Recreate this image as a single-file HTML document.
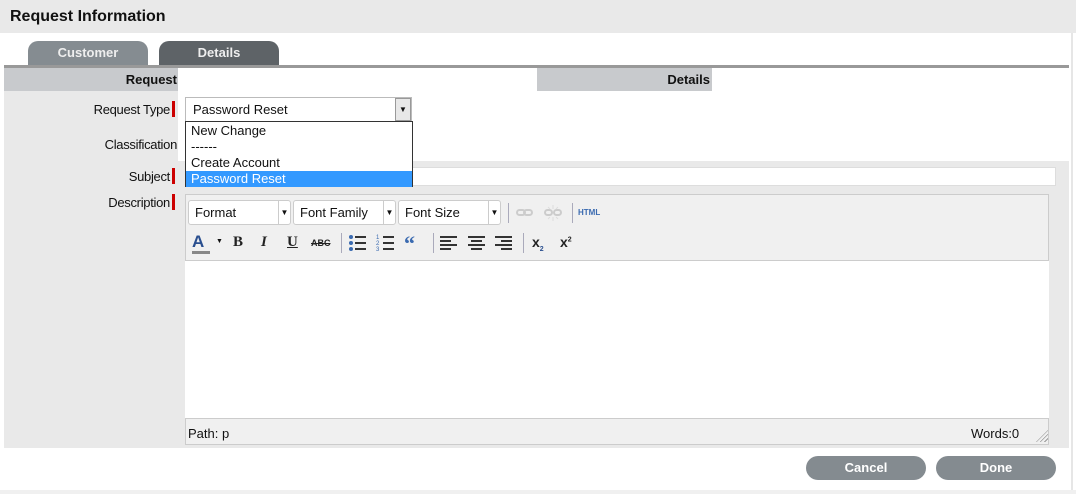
<!DOCTYPE html>
<html><head><style>
*{box-sizing:border-box;margin:0;padding:0}
body{width:1076px;height:494px;position:relative;background:#fff;font-family:"Liberation Sans",sans-serif;font-size:13px;color:#111;overflow:hidden}
.a{position:absolute}
.btn{position:absolute;top:456px;height:24px;width:120px;border-radius:12px;background:#848b90;color:#fff;font-weight:bold;text-align:center;line-height:24px;font-size:13px}
.lbl{position:absolute;text-align:right;font-size:13px;letter-spacing:-0.3px}
.req{position:absolute;left:172px;width:3px;height:16px;background:#c00}
.sel{position:absolute;top:200px;height:25px;background:#fff;border:1px solid #ccc;border-radius:3px;padding-left:6px;line-height:23px}
.sel i{position:absolute;right:0;top:0;width:12px;height:23px;border-left:1px solid #ccc;font-style:normal;font-size:8px;text-align:center}
.ic{position:absolute;top:234px;font-weight:bold;font-size:14px;color:#222}
.sep{position:absolute;width:1px;height:20px;background:#aab}
svg{position:absolute}
</style></head><body>
<div class="a" style="left:0;top:0;width:1076px;height:33px;background:#e9e9e9"></div>
<div class="a" style="left:10px;top:8px;font-weight:bold;font-size:16px">Request Information</div>
<div class="a" style="left:1071px;top:33px;width:2px;height:461px;background:#e6e6e6"></div>
<div class="a" style="left:0;top:490px;width:1076px;height:4px;background:#f0f0f0"></div>
<div class="a" style="left:28px;top:41px;width:120px;height:24px;background:#858c91;border-radius:10px 10px 0 0;color:#eee;font-weight:bold;text-align:center;line-height:24px">Customer</div>
<div class="a" style="left:159px;top:41px;width:120px;height:24px;background:#5e6367;border-radius:10px 10px 0 0;color:#eee;font-weight:bold;text-align:center;line-height:24px">Details</div>
<div class="a" style="left:4px;top:65px;width:1065px;height:3px;background:#999"></div>
<div class="a" style="left:4px;top:68px;width:174px;height:380px;background:#e9e9e9"></div>
<div class="a" style="left:4px;top:68px;width:174px;height:23px;background:#c8cacd;text-align:right;padding-right:1px;font-weight:bold;line-height:23px">Request</div>
<div class="a" style="left:537px;top:68px;width:175px;height:23px;background:#c8cacd;text-align:right;padding-right:2px;font-weight:bold;line-height:23px">Details</div>
<div class="a" style="left:178px;top:161px;width:891px;height:287px;background:#e9e9e9"></div>
<div class="lbl" style="top:102px;right:906px">Request Type</div><div class="req" style="top:101px"></div>
<div class="lbl" style="top:137px;right:899px">Classification</div>
<div class="lbl" style="top:169px;right:906px">Subject</div><div class="req" style="top:168px"></div>
<div class="lbl" style="top:195px;right:906px">Description</div><div class="req" style="top:194px"></div>
<div class="a" style="left:185px;top:167px;width:871px;height:19px;background:#fff;border:1px solid #ddd"></div>
<div class="a" style="left:185px;top:194px;width:864px;height:251px;background:#f0f0f0;border:1px solid #ccc"></div>
<div class="a" style="left:185px;top:260px;width:864px;height:159px;background:#fff;border-top:1px solid #ccc;border-bottom:1px solid #ccc"></div>
<div class="a" style="left:188px;top:426px">Path: p</div>
<div class="a" style="left:971px;top:426px">Words:0</div>
<div class="a" style="left:1036px;top:430px;width:12px;height:12px;background:repeating-linear-gradient(135deg,transparent 0 2px,#999 2px 3px);clip-path:polygon(100% 0,100% 100%,0 100%)"></div>
<div class="sel" style="left:188px;width:103px">Format<i>▼</i></div>
<div class="sel" style="left:293px;width:103px">Font Family<i>▼</i></div>
<div class="sel" style="left:398px;width:103px">Font Size<i>▼</i></div>
<div class="sep" style="left:508px;top:203px"></div>
<svg style="left:515px;top:205px" width="50" height="16"><g fill="none" stroke="#ccc" stroke-width="2"><rect x="2" y="5" width="8" height="5" rx="2.5"/><rect x="9" y="5" width="8" height="5" rx="2.5"/><rect x="30" y="5" width="7" height="5" rx="2.5"/><rect x="39" y="5" width="7" height="5" rx="2.5"/></g><g stroke="#ddd"><path d="M38 0v4M38 12v4M33 2l2 2M43 2l-2 2M33 14l2-2M43 14l-2-2"/></g></svg>
<div class="sep" style="left:572px;top:203px"></div>
<div class="a" style="left:578px;top:208px;color:#3a6ab0;font-size:8px;font-weight:bold">HTML</div>
<div class="ic" style="left:192px;top:232px;color:#2a4f8f;font-size:17px">A</div>
<div class="a" style="left:192px;top:251px;width:18px;height:3px;background:#888"></div>
<div class="a" style="left:216px;top:238px;font-size:7px">▼</div>
<div class="ic" style="left:233px;font-family:'Liberation Serif';font-size:15px">B</div>
<div class="ic" style="left:261px;font-family:'Liberation Serif';font-style:italic;font-size:15px">I</div>
<div class="ic" style="left:287px;font-family:'Liberation Serif';text-decoration:underline;font-size:15px">U</div>
<div class="ic" style="left:311px;font-size:9px;top:238px;text-decoration:line-through">ABC</div>
<div class="sep" style="left:341px;top:233px"></div>
<svg style="left:348px;top:234px" width="20" height="18"><g fill="#3a6ab0"><circle cx="3" cy="3" r="2"/><circle cx="3" cy="9" r="2"/><circle cx="3" cy="15" r="2"/></g><path d="M7 3h11M7 9h11M7 15h11" stroke="#333" stroke-width="2"/></svg>
<svg style="left:376px;top:234px" width="20" height="18"><g fill="#3a6ab0" font-size="6" font-family="Liberation Sans"><text x="0" y="5">1</text><text x="0" y="11">2</text><text x="0" y="17">3</text></g><path d="M7 3h11M7 9h11M7 15h11" stroke="#333" stroke-width="2"/></svg>
<div class="ic" style="left:404px;font-size:22px;top:231px;color:#3a6ab0;font-family:'Liberation Serif'">“</div>
<div class="sep" style="left:433px;top:233px"></div>
<svg style="left:440px;top:235px" width="18" height="16"><path d="M0 2h17M0 6h11M0 10h17M0 14h11" stroke="#333" stroke-width="2"/></svg>
<svg style="left:468px;top:235px" width="18" height="16"><path d="M0 2h17M3 6h11M0 10h17M3 14h11" stroke="#333" stroke-width="2"/></svg>
<svg style="left:495px;top:235px" width="18" height="16"><path d="M0 2h17M6 6h11M0 10h17M6 14h11" stroke="#333" stroke-width="2"/></svg>
<div class="sep" style="left:523px;top:233px"></div>
<div class="ic" style="left:532px">x<sub style="font-size:7px;color:#2a4f8f">2</sub></div>
<div class="ic" style="left:560px">x<sup style="font-size:7px">2</sup></div>
<div class="a" style="left:185px;top:97px;width:227px;height:25px;background:#fff;border:1px solid #bbb"></div>
<div class="a" style="left:193px;top:102px">Password Reset</div>
<div class="a" style="left:395px;top:98px;width:16px;height:23px;background:#e8e8e8;border:1px solid #999;font-size:8px;text-align:center;line-height:21px">▼</div>
<div class="a" style="left:185px;top:121px;width:228px;height:66px;background:#fff;border:1px solid #333;line-height:16px">
<div style="padding-left:5px;margin-top:1px">New Change</div>
<div style="padding-left:5px">------</div>
<div style="padding-left:5px">Create Account</div>
<div style="padding-left:5px;background:#3399ff;color:#fff">Password Reset</div>
</div>
<div class="btn" style="left:806px">Cancel</div>
<div class="btn" style="left:936px">Done</div>
</body></html>
